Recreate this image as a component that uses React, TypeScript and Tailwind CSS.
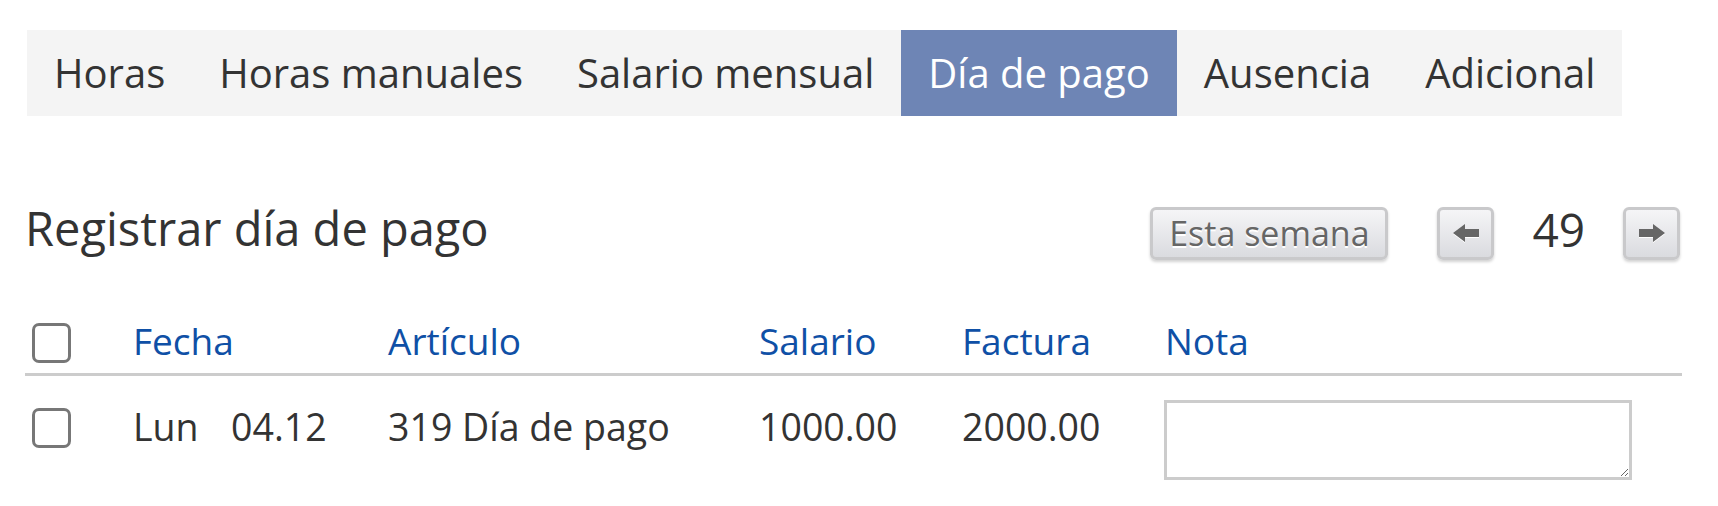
import React from "react";

const tabs = ["Horas", "Horas manuales", "Salario mensual", "Día de pago", "Ausencia", "Adicional"];
const ACTIVE = "Día de pago";

function Checkbox({ className = "" }: { className?: string }) {
  return (
    <div
      className={`w-[39px] h-[40px] rounded-[7px] border-[3px] border-[#777777] bg-white ${className}`}
    />
  );
}

function ArrowButton({ dir }: { dir: "left" | "right" }) {
  return (
    <button className="w-[57px] h-[53px] flex items-center justify-center rounded-[6px] border-[3px] border-[#c9c9cb] bg-gradient-to-b from-[#f5f5f7] to-[#dadbdf] shadow-[0_2px_3px_rgba(0,0,0,0.18)]">
      <svg width="26" height="18" viewBox="0 0 26 18" className="drop-shadow-[0_1px_0_#ffffff]">
        {dir === "left" ? (
          <polygon points="0,9 12,0 12,5 26,5 26,13 12,13 12,18" fill="#666666" />
        ) : (
          <polygon points="26,9 14,0 14,5 0,5 0,13 14,13 14,18" fill="#666666" />
        )}
      </svg>
    </button>
  );
}

export default function App() {
  return (
    <div
      className="w-[1718px] h-[506px] bg-white text-[#333333] pt-[30px] pl-[25px] pr-[36px]"
      style={{ fontFamily: '"Open Sans", "Noto Sans", sans-serif' }}
    >
      {/* tabs */}
      <div className="inline-flex h-[86px] ml-[2px] bg-[#f4f4f4]">
        {tabs.map((t) => (
          <div
            key={t}
            className={`flex items-center px-[27px] text-[40px] ${
              t === ACTIVE ? "bg-[#6e85b5] text-white" : "text-[#333333]"
            }`}
          >
            {t}
          </div>
        ))}
      </div>

      {/* heading row */}
      <div className="mt-[81px] h-[63px] flex items-center justify-between">
        <h2 className="text-[47px] leading-normal">Registrar día de pago</h2>
        <div className="flex items-center mt-[9px] pr-[2px]">
          <button className="w-[238px] h-[53px] rounded-[6px] border-[3px] border-[#c9c9cb] bg-gradient-to-b from-[#f5f5f7] to-[#dadbdf] shadow-[0_2px_3px_rgba(0,0,0,0.18)] text-[34px] leading-none text-[#666666] [text-shadow:0_2px_0_#ffffff]">
            Esta semana
          </button>
          <div className="ml-[49px]">
            <ArrowButton dir="left" />
          </div>
          <span className="mx-[38px] text-[46px] leading-none -mt-[8px]">49</span>
          <ArrowButton dir="right" />
        </div>
      </div>

      {/* table */}
      <div className="mt-[53px]">
        <div className="grid grid-cols-[108px_255px_371px_203px_203px_1fr] items-start h-[63px] border-b-[3px] border-[#cccccc] text-[37px] leading-normal text-[#0f50a6]">
          <div className="pl-[7px] pt-[10px]">
            <Checkbox />
          </div>
          <div>Fecha</div>
          <div>Artículo</div>
          <div>Salario</div>
          <div>Factura</div>
          <div>Nota</div>
        </div>
        <div className="grid grid-cols-[108px_255px_371px_203px_203px_1fr] items-start pt-[23px] text-[37.5px] leading-normal">
          <div className="pl-[7px] pt-[9px]">
            <Checkbox />
          </div>
          <div>
            <span className="inline-block w-[98px]">Lun</span>
            <span>04.12</span>
          </div>
          <div>319 Día de pago</div>
          <div>1000.00</div>
          <div>2000.00</div>
          <div className="pt-[1px] -ml-[1px]">
            <textarea className="block w-[468px] h-[80px] border-[3px] border-[#cccccc] bg-white outline-none" />
          </div>
        </div>
      </div>
    </div>
  );
}
